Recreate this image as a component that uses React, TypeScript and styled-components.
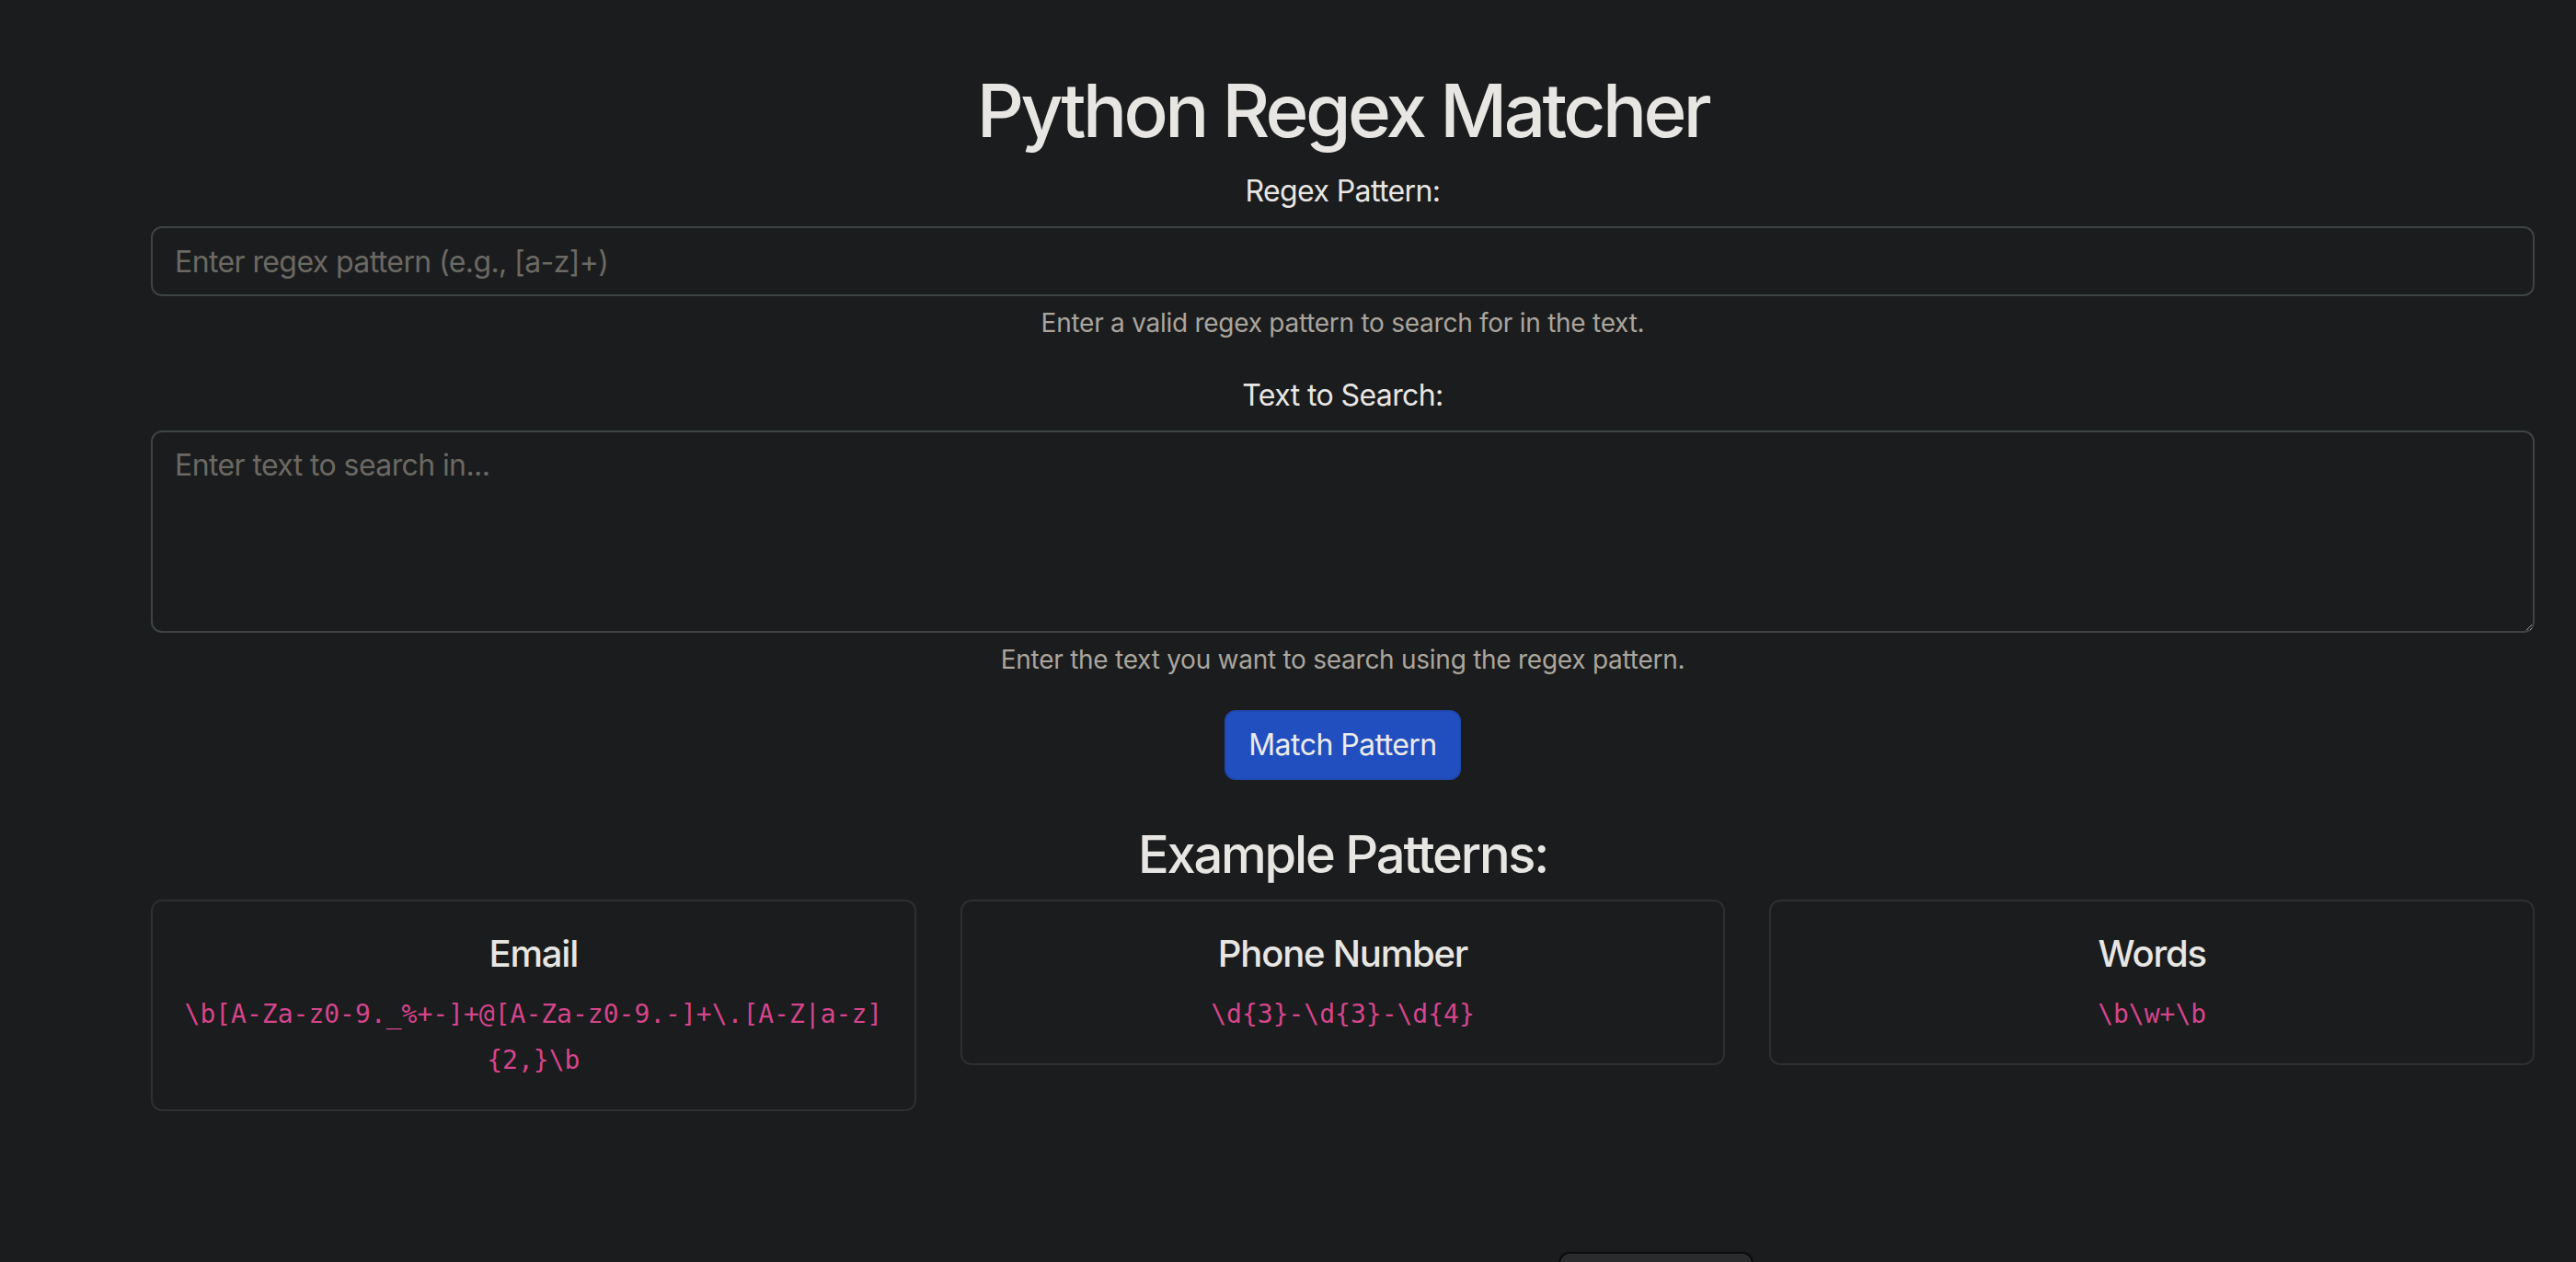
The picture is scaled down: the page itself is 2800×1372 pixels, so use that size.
import styled, { createGlobalStyle } from "styled-components";

const patterns = [
  { name: "Email", regex: "\\b[A-Za-z0-9._%+-]+@[A-Za-z0-9.-]+\\.[A-Z|a-z]{2,}\\b" },
  { name: "Phone Number", regex: "\\d{3}-\\d{3}-\\d{4}" },
  { name: "Words", regex: "\\b\\w+\\b" },
];

const GlobalStyle = createGlobalStyle`
  html, body {
    margin: 0;
    padding: 0;
    background: #1b1c1e;
    color: #e8e6e3;
    font-family: Inter, "Noto Sans", "Liberation Sans", sans-serif;
    font-size: 32px;
    line-height: 1.5;
  }
  * {
    box-sizing: border-box;
  }
`;

export default function App() {
  return (
    <>
      <GlobalStyle />
      <Container>
        <Title>Python Regex Matcher</Title>
        <Field>
          <Label htmlFor="pattern">Regex Pattern:</Label>
          <Input id="pattern" type="text" placeholder="Enter regex pattern (e.g., [a-z]+)" />
          <Hint>Enter a valid regex pattern to search for in the text.</Hint>
        </Field>
        <Field>
          <Label htmlFor="text">Text to Search:</Label>
          <TextArea id="text" rows={4} placeholder="Enter text to search in..." />
          <Hint>Enter the text you want to search using the regex pattern.</Hint>
        </Field>
        <Button type="button">Match Pattern</Button>
        <SubTitle>Example Patterns:</SubTitle>
        <CardRow>
          {patterns.map((p) => (
            <Card key={p.name}>
              <CardTitle>{p.name}</CardTitle>
              <CardText>
                <Code>{p.regex}</Code>
              </CardText>
            </Card>
          ))}
        </CardRow>
      </Container>
      <FloatingTab />
    </>
  );
}

const Container = styled.main`
  padding: 72px 45px 120px 164px;
  text-align: center;
`;

const Title = styled.h1`
  font-size: 80px;
  font-weight: 500;
  line-height: 1.2;
  margin: 0 0 16px;
  letter-spacing: -3.6px;
`;

const Field = styled.div`
  margin-bottom: 34px;
`;

const Label = styled.label`
  display: block;
  font-size: 32px;
  line-height: 48px;
  margin-bottom: 14px;
  letter-spacing: -0.6px;
`;

const controlStyles = `
  display: block;
  width: 100%;
  padding: 12px 24px;
  font-family: Inter, "Noto Sans", "Liberation Sans", sans-serif;
  font-size: 32px;
  line-height: 48px;
  letter-spacing: -0.6px;
  color: #e8e6e3;
  background: #1b1c1e;
  border: 2px solid #3e4346;
  border-radius: 12px;
  outline: none;
  &::placeholder {
    color: #6b6963;
  }
`;

const Input = styled.input`
  ${controlStyles}
  height: 76px;
`;

const TextArea = styled.textarea`
  ${controlStyles}
  height: 220px;
  resize: vertical;
`;

const Hint = styled.div`
  margin-top: 8px;
  font-size: 28px;
  line-height: 42px;
  color: #aaa59d;
  letter-spacing: -0.26px;
`;

const Button = styled.button`
  display: inline-block;
  font-family: Inter, "Noto Sans", "Liberation Sans", sans-serif;
  font-size: 32px;
  line-height: 48px;
  letter-spacing: -0.55px;
  padding: 12px 24px;
  color: #ecebea;
  background: #224fbf;
  border: 2px solid #1f49b0;
  border-radius: 12px;
  cursor: pointer;
`;

const SubTitle = styled.h3`
  font-size: 56px;
  font-weight: 500;
  line-height: 1.2;
  margin: 48px 0 15px;
  letter-spacing: -2.2px;
`;

const CardRow = styled.div`
  display: grid;
  grid-template-columns: repeat(3, 1fr);
  gap: 48px;
  align-items: start;
`;

const Card = styled.div`
  border: 2px solid #2d2f31;
  border-radius: 12px;
  padding: 33px 32px 29px;
  background: #1b1c1e;
`;

const CardTitle = styled.h5`
  font-size: 40px;
  font-weight: 500;
  line-height: 48px;
  margin: 0 0 16px;
  letter-spacing: -1.2px;
`;

const CardText = styled.p`
  margin: 0;
  line-height: 48px;
`;

const Code = styled.code`
  font-family: "DejaVu Sans Mono", "Liberation Mono", monospace;
  font-size: 28px;
  color: #d5458b;
  word-wrap: break-word;
`;

const FloatingTab = styled.div`
  position: fixed;
  left: 1694px;
  top: 1361px;
  width: 212px;
  height: 48px;
  background: #2a2b2c;
  border: 2px solid #0c0c0c;
  border-radius: 12px;
`;
